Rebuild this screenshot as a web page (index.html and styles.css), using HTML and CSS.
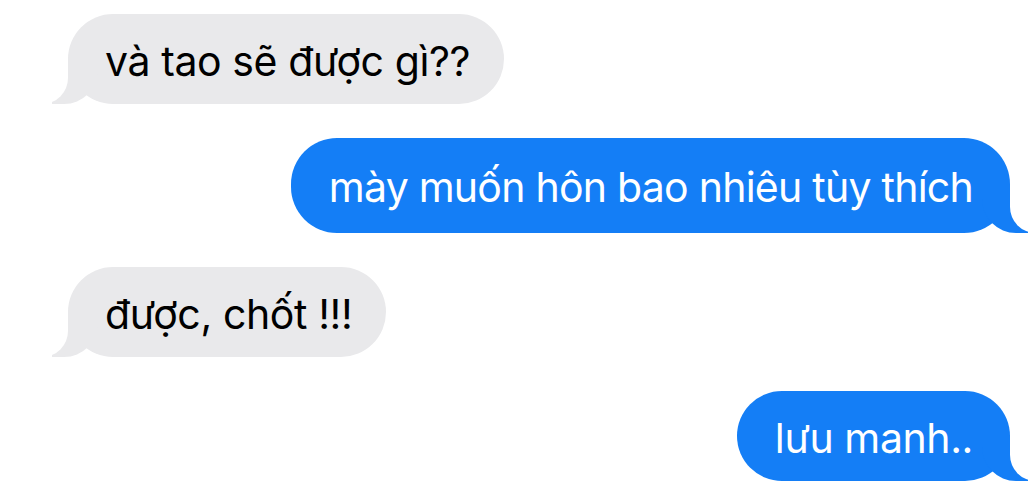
FILE: index.html
```html
<!DOCTYPE html>
<html lang="vi">
<head>
<meta charset="utf-8">
<title>Tin nhắn</title>
<link rel="stylesheet" href="styles.css">
</head>
<body>
<div class="chat">
  <div class="bubble them">và tao sẽ được gì??</div>
  <div class="bubble me big">mày muốn hôn bao nhiêu tùy thích</div>
  <div class="bubble them">được, chốt !!!</div>
  <div class="bubble me">lưu manh..</div>
</div>
</body>
</html>
```

FILE: styles.css
```css
html, body {
  margin: 0;
  background: #ffffff;
}

body {
  font-family: "Inter", "Noto Sans", "Liberation Sans", sans-serif;
  width: 1032px;
  height: 497px;
  overflow: hidden;
}

.chat {
  display: flex;
  flex-direction: column;
  gap: 34px;
  padding: 14px 22px 0 68px;
}

.bubble {
  position: relative;
  font-size: 41px;
  letter-spacing: -0.4px;
  line-height: 48px;
  padding: 23px 34px 19px 37px;
  border-radius: 46px;
  white-space: nowrap;
}

.them {
  align-self: flex-start;
  background: #e9e9eb;
  color: #000;
}

.me {
  align-self: flex-end;
  background: #147ef6;
  color: #fff;
  padding: 23px 37px 19px 38px;
}

.big {
  letter-spacing: -0.75px;
  padding-top: 25px;
  padding-bottom: 22px;
}

.bubble::before,
.bubble::after {
  content: "";
  position: absolute;
  bottom: 0;
  width: 46px;
  height: 46px;
}

.them::before {
  left: -16px;
  background: #e9e9eb;
  border-bottom-right-radius: 34px;
}

.them::after {
  left: -46px;
  background: #fff;
  border-bottom-right-radius: 26px;
}

.me::before {
  right: -18px;
  background: #147ef6;
  border-bottom-left-radius: 34px;
}

.me::after {
  right: -46px;
  background: #fff;
  border-bottom-left-radius: 26px;
}
```
